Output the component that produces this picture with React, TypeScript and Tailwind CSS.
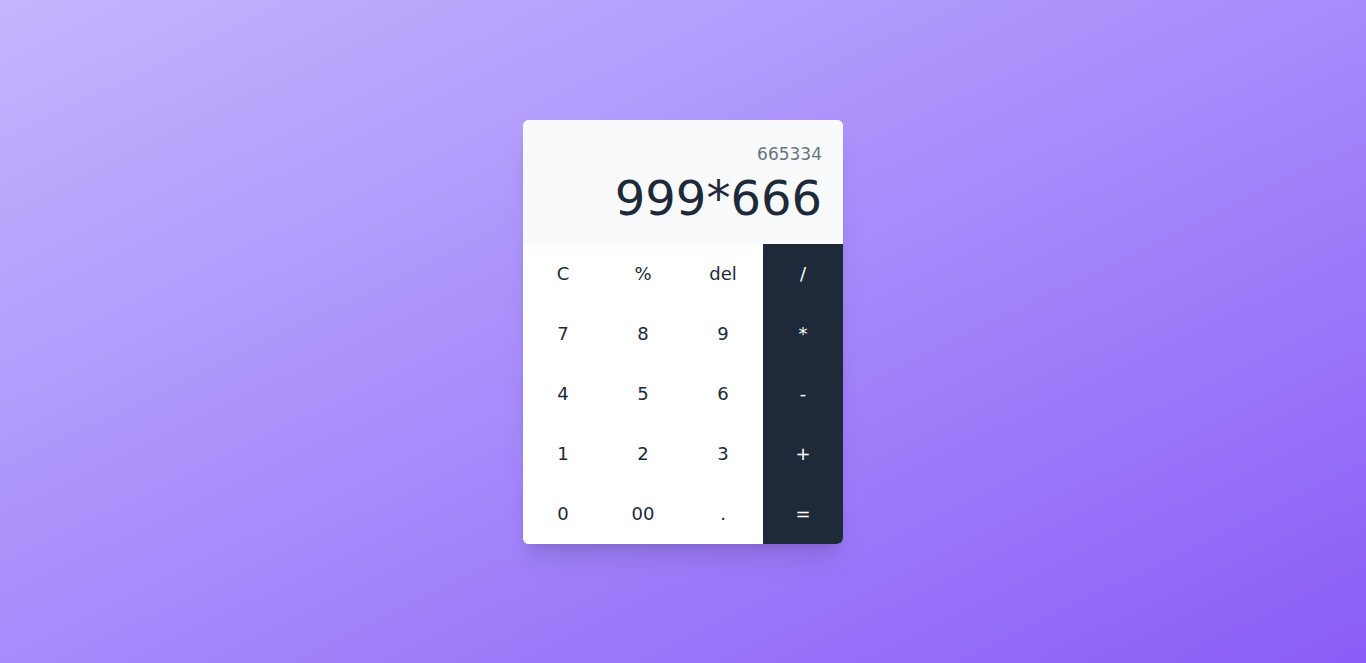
import React from "react";

const rows = [
  ["C", "%", "del", "/"],
  ["7", "8", "9", "*"],
  ["4", "5", "6", "-"],
  ["1", "2", "3", "+"],
  ["0", "00", ".", "="],
];

const App = () => {
  return (
    <div className="min-h-screen flex items-center justify-center bg-gradient-to-br from-[#c4b5fd] to-[#8b5cf6] font-['DejaVu_Sans',sans-serif]">
      <div className="w-80 rounded-md overflow-hidden bg-white shadow-xl">
        <div className="bg-gray-50 pt-5 pb-[22px] pl-5 pr-[21px] flex flex-col items-end">
          <div className="text-[17px] leading-7 text-gray-500 mb-1.5">665334</div>
          <div className="text-5xl leading-none text-gray-800">999*666</div>
        </div>
        <div className="grid grid-cols-4">
          {rows.map((row) =>
            row.map((key, i) => (
              <button
                key={key}
                className={
                  i === 3
                    ? "h-[60px] text-lg bg-gray-800 text-white"
                    : "h-[60px] text-lg bg-white text-gray-800"
                }
              >
                {key}
              </button>
            ))
          )}
        </div>
      </div>
    </div>
  );
};

export default App;
